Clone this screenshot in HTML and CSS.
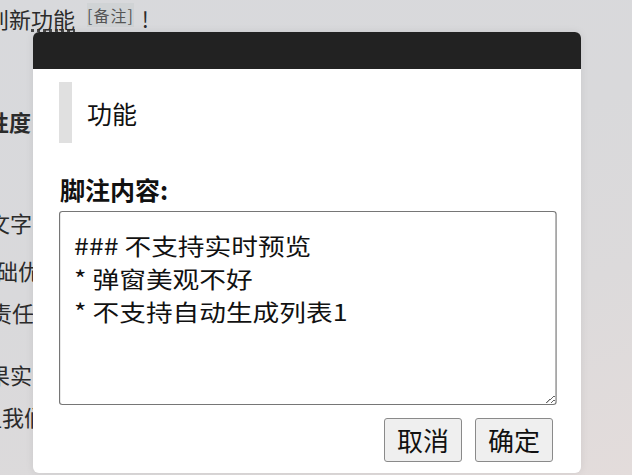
FILE: index.html
```html
<!DOCTYPE html>
<html lang="zh-CN">
<head>
<meta charset="utf-8">
<title>脚注</title>
<link rel="stylesheet" href="styles.css">
</head>
<body>
<main class="page">
  <p class="line l1">特别新<span class="term">功能</span><sup class="note">[备注]</sup><span class="bang">!</span></p>
  <p class="line l2 strong">性度</p>
  <p class="line l3">文字</p>
  <p class="line l4">基础优</p>
  <p class="line l5">负责任</p>
  <p class="line l6">成果实</p>
  <p class="line l7">让我们</p>
</main>
<div class="overlay">
  <section class="dialog">
    <header class="dialog-head"></header>
    <div class="dialog-body">
      <blockquote class="quote">功能</blockquote>
      <label class="label" for="fn">脚注内容:</label>
      <textarea id="fn" class="field">### 不支持实时预览
* 弹窗美观不好
* 不支持自动生成列表1</textarea>
      <div class="actions">
        <button class="btn" type="button">取消</button>
        <button class="btn" type="button">确定</button>
      </div>
    </div>
  </section>
</div>
</body>
</html>
```
FILE: styles.css
```css
html, body {
  margin: 0;
  padding: 0;
  width: 632px;
  height: 475px;
  overflow: hidden;
}
body {
  font-family: "Noto Sans CJK SC", "Noto Sans", sans-serif;
  background: linear-gradient(160deg, #d8d9dc 0%, #d9d9db 45%, #dcdadb 70%, #e3dcdb 100%);
  color: #2b2b2b;
  position: relative;
}
.page {
  display: flex;
  flex-direction: column;
  font-size: 22px;
  line-height: 30px;
}
.line {
  margin: 0;
  white-space: nowrap;
}
.l1 { margin-left: -35px; margin-top: 3px; }
.l2 { margin-left: -13px; margin-top: 73px; font-weight: 700; }
.l3 { margin-left: -12px; margin-top: 71px; }
.l4 { margin-left: -26px; margin-top: 18px; }
.l5 { margin-left: -32px; margin-top: 12px; }
.l6 { margin-left: -34px; margin-top: 32px; }
.l7 { margin-left: -20px; margin-top: 12px; }
.term {
  background: repeating-linear-gradient(90deg, #4a4a4a 0 3px, transparent 3px 6px) 0 calc(100% - 2px) / 100% 3px no-repeat;
}
.note {
  font-size: 16px;
  color: #555;
  background: #d0d3d5;
  vertical-align: 6px;
  line-height: 16px;
  margin: 0 0 0 12px;
  letter-spacing: 1px;
}
.bang {
  margin-left: 8px;
}
.overlay {
  position: absolute;
  inset: 0;
}
.dialog {
  position: absolute;
  left: 33px;
  top: 32px;
  width: 548px;
  height: 441px;
  background: #fff;
  border-radius: 6px;
  overflow: hidden;
  display: flex;
  flex-direction: column;
  box-shadow: 0 0 8px rgba(0,0,0,0.08);
}
.dialog-head {
  height: 37px;
  background: #222;
  flex: none;
}
.dialog-body {
  padding: 13px 24px 11px 26px;
  display: flex;
  flex-direction: column;
  align-items: flex-start;
  color: #111;
}
.quote {
  margin: 0;
  align-self: stretch;
  height: 61px;
  border-left: 13px solid #e0e0e0;
  padding-left: 15px;
  display: flex;
  align-items: center;
  font-size: 25px;
  color: #111;
}
.label {
  margin-top: 31px;
  font-size: 25px;
  font-weight: 700;
  line-height: 30px;
  padding-left: 1px;
}
.field {
  margin: 7px 0 0;
  box-sizing: border-box;
  width: 429px;
  height: 194px;
  padding: 17px 12px;
  border: 1px solid #767676;
  border-radius: 3px;
  font-family: "Noto Sans CJK SC", "Noto Sans", sans-serif;
  font-size: 23px;
  line-height: 33px;
  color: #111;
  background: #fff;
  transform: scaleX(1.16);
  transform-origin: 0 0;
  resize: both;
}
.actions {
  align-self: stretch;
  margin-top: 13px;
  margin-right: 4px;
  display: flex;
  justify-content: flex-end;
  gap: 13px;
}
.btn {
  height: 44px;
  padding: 0 12px;
  font-family: "Noto Sans CJK SC", "Noto Sans", sans-serif;
  font-size: 26px;
  line-height: 34px;
  color: #111;
  background: #efefef;
  border: 1px solid #8a8a8a;
  border-radius: 3px;
}
```
